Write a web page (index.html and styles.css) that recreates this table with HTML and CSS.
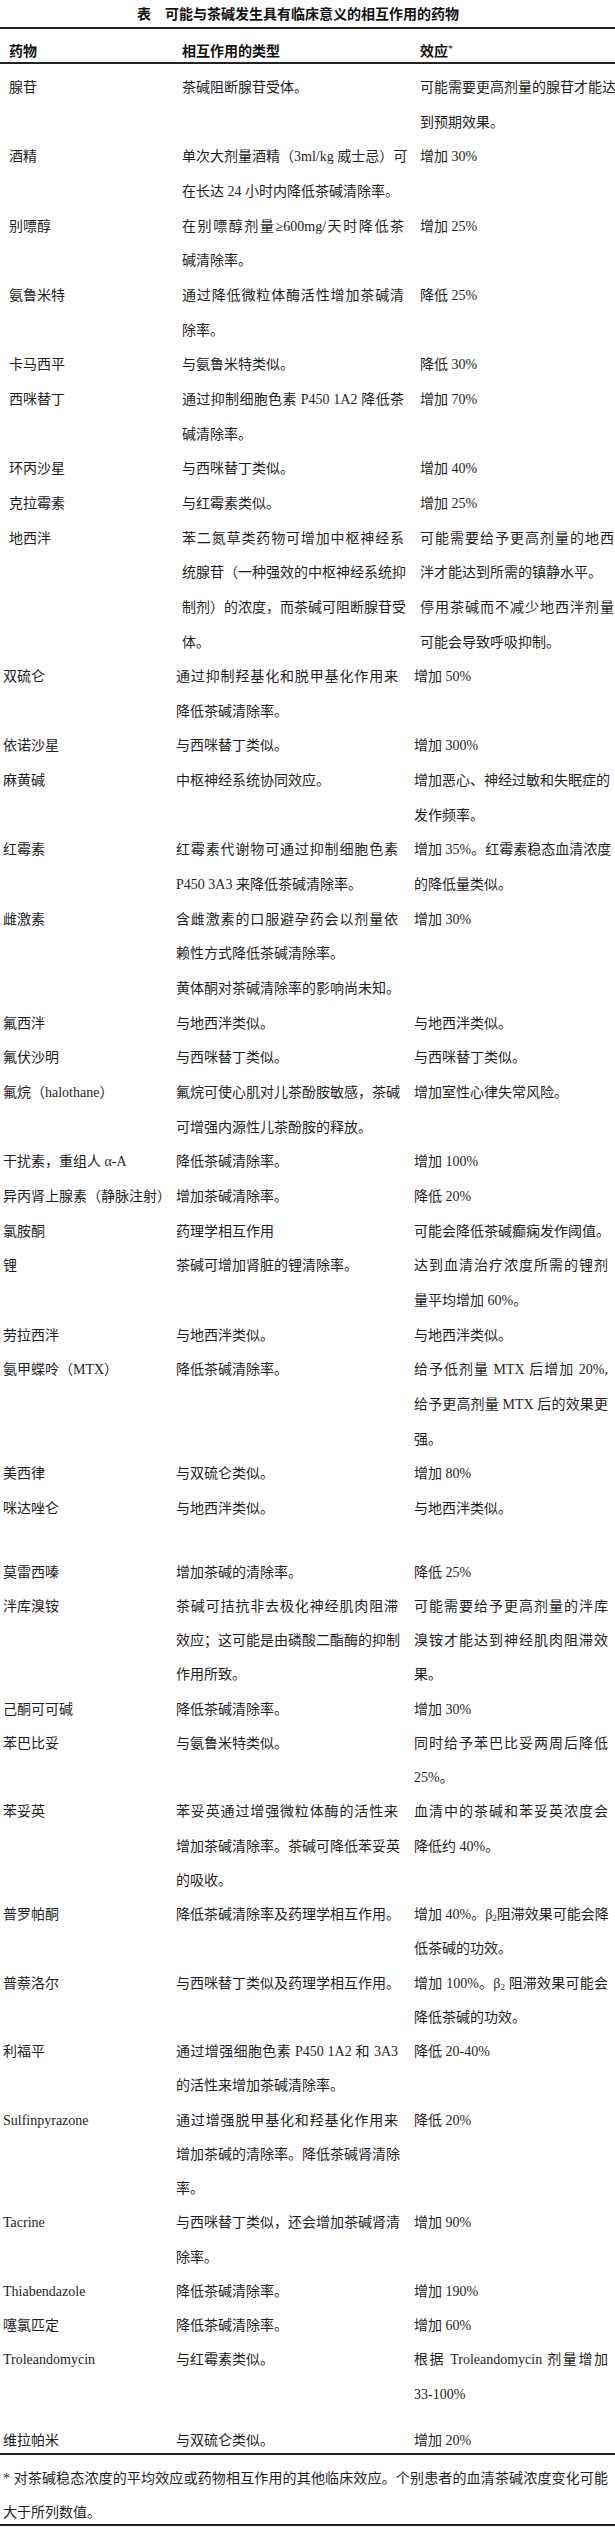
FILE: index.html
```html
<!DOCTYPE html>
<html lang="zh-CN">
<head>
<meta charset="utf-8">
<title>可能与茶碱发生具有临床意义的相互作用的药物</title>
<link rel="stylesheet" href="styles.css">
</head>
<body>
<div class="page">
  <h1 class="title">表&emsp;可能与茶碱发生具有临床意义的相互作用的药物</h1>
  <div class="table">
    <div class="head row">
      <div class="c1">药物</div>
      <div class="c2">相互作用的类型</div>
      <div class="c3">效应<sup class="star">*</sup></div>
    </div>
    <div class="body">
      <div class="grp grp-a">
        <div class="row"><div class="c1">腺苷</div><div class="c2"><span class="l">茶碱阻断腺苷受体。</span></div><div class="c3"><span class="l j">可能需要更高剂量的腺苷才能达</span><span class="l">到预期效果。</span></div></div>
        <div class="row"><div class="c1">酒精</div><div class="c2"><span class="l j">单次大剂量酒精（3ml/kg 威士忌）可</span><span class="l">在长达 24 小时内降低茶碱清除率。</span></div><div class="c3"><span class="l">增加 30%</span></div></div>
        <div class="row"><div class="c1">别嘌醇</div><div class="c2"><span class="l j">在别嘌醇剂量≥600mg/天时降低茶</span><span class="l">碱清除率。</span></div><div class="c3"><span class="l">增加 25%</span></div></div>
        <div class="row"><div class="c1">氨鲁米特</div><div class="c2"><span class="l j">通过降低微粒体酶活性增加茶碱清</span><span class="l">除率。</span></div><div class="c3"><span class="l">降低 25%</span></div></div>
        <div class="row"><div class="c1">卡马西平</div><div class="c2"><span class="l">与氨鲁米特类似。</span></div><div class="c3"><span class="l">降低 30%</span></div></div>
        <div class="row"><div class="c1">西咪替丁</div><div class="c2"><span class="l j">通过抑制细胞色素 P450 1A2 降低茶</span><span class="l">碱清除率。</span></div><div class="c3"><span class="l">增加 70%</span></div></div>
        <div class="row"><div class="c1">环丙沙星</div><div class="c2"><span class="l">与西咪替丁类似。</span></div><div class="c3"><span class="l">增加 40%</span></div></div>
        <div class="row"><div class="c1">克拉霉素</div><div class="c2"><span class="l">与红霉素类似。</span></div><div class="c3"><span class="l">增加 25%</span></div></div>
        <div class="row"><div class="c1">地西泮</div><div class="c2"><span class="l j">苯二氮草类药物可增加中枢神经系</span><span class="l j">统腺苷（一种强效的中枢神经系统抑</span><span class="l j">制剂）的浓度，而茶碱可阻断腺苷受</span><span class="l">体。</span></div><div class="c3"><span class="l j">可能需要给予更高剂量的地西</span><span class="l">泮才能达到所需的镇静水平。</span><span class="l j">停用茶碱而不减少地西泮剂量</span><span class="l">可能会导致呼吸抑制。</span></div></div>
      </div>
      <div class="grp grp-b">
        <div class="row"><div class="c1">双硫仑</div><div class="c2"><span class="l j">通过抑制羟基化和脱甲基化作用来</span><span class="l">降低茶碱清除率。</span></div><div class="c3"><span class="l">增加 50%</span></div></div>
        <div class="row"><div class="c1">依诺沙星</div><div class="c2"><span class="l">与西咪替丁类似。</span></div><div class="c3"><span class="l">增加 300%</span></div></div>
        <div class="row"><div class="c1">麻黄碱</div><div class="c2"><span class="l">中枢神经系统协同效应。</span></div><div class="c3"><span class="l j">增加恶心、神经过敏和失眠症的</span><span class="l">发作频率。</span></div></div>
        <div class="row"><div class="c1">红霉素</div><div class="c2"><span class="l j">红霉素代谢物可通过抑制细胞色素</span><span class="l">P450 3A3 来降低茶碱清除率。</span></div><div class="c3"><span class="l j">增加 35%。红霉素稳态血清浓度</span><span class="l">的降低量类似。</span></div></div>
        <div class="row"><div class="c1">雌激素</div><div class="c2"><span class="l j">含雌激素的口服避孕药会以剂量依</span><span class="l">赖性方式降低茶碱清除率。</span><span class="l">黄体酮对茶碱清除率的影响尚未知。</span></div><div class="c3"><span class="l">增加 30%</span></div></div>
        <div class="row"><div class="c1">氟西泮</div><div class="c2"><span class="l">与地西泮类似。</span></div><div class="c3"><span class="l">与地西泮类似。</span></div></div>
        <div class="row"><div class="c1">氟伏沙明</div><div class="c2"><span class="l">与西咪替丁类似。</span></div><div class="c3"><span class="l">与西咪替丁类似。</span></div></div>
        <div class="row"><div class="c1">氟烷（halothane）</div><div class="c2"><span class="l j">氟烷可使心肌对儿茶酚胺敏感，茶碱</span><span class="l">可增强内源性儿茶酚胺的释放。</span></div><div class="c3"><span class="l">增加室性心律失常风险。</span></div></div>
        <div class="row"><div class="c1">干扰素，重组人 α-A</div><div class="c2"><span class="l">降低茶碱清除率。</span></div><div class="c3"><span class="l">增加 100%</span></div></div>
        <div class="row"><div class="c1">异丙肾上腺素（静脉注射）</div><div class="c2"><span class="l">增加茶碱清除率。</span></div><div class="c3"><span class="l">降低 20%</span></div></div>
        <div class="row"><div class="c1">氯胺酮</div><div class="c2"><span class="l">药理学相互作用</span></div><div class="c3"><span class="l">可能会降低茶碱癫痫发作阈值。</span></div></div>
        <div class="row"><div class="c1">锂</div><div class="c2"><span class="l">茶碱可增加肾脏的锂清除率。</span></div><div class="c3"><span class="l j">达到血清治疗浓度所需的锂剂</span><span class="l">量平均增加 60%。</span></div></div>
        <div class="row"><div class="c1">劳拉西泮</div><div class="c2"><span class="l">与地西泮类似。</span></div><div class="c3"><span class="l">与地西泮类似。</span></div></div>
        <div class="row"><div class="c1">氨甲蝶呤（MTX）</div><div class="c2"><span class="l">降低茶碱清除率。</span></div><div class="c3"><span class="l j">给予低剂量 MTX 后增加 20%,</span><span class="l j">给予更高剂量 MTX 后的效果更</span><span class="l">强。</span></div></div>
        <div class="row"><div class="c1">美西律</div><div class="c2"><span class="l">与双硫仑类似。</span></div><div class="c3"><span class="l">增加 80%</span></div></div>
        <div class="row"><div class="c1">咪达唑仑</div><div class="c2"><span class="l">与地西泮类似。</span></div><div class="c3"><span class="l">与地西泮类似。</span></div></div>
      </div>
      <div class="grp grp-c">
        <div class="row"><div class="c1">莫雷西嗪</div><div class="c2"><span class="l">增加茶碱的清除率。</span></div><div class="c3"><span class="l">降低 25%</span></div></div>
        <div class="row"><div class="c1">泮库溴铵</div><div class="c2"><span class="l j">茶碱可拮抗非去极化神经肌肉阻滞</span><span class="l j">效应；这可能是由磷酸二酯酶的抑制</span><span class="l">作用所致。</span></div><div class="c3"><span class="l j">可能需要给予更高剂量的泮库</span><span class="l j">溴铵才能达到神经肌肉阻滞效</span><span class="l">果。</span></div></div>
        <div class="row"><div class="c1">己酮可可碱</div><div class="c2"><span class="l">降低茶碱清除率。</span></div><div class="c3"><span class="l">增加 30%</span></div></div>
        <div class="row"><div class="c1">苯巴比妥</div><div class="c2"><span class="l">与氨鲁米特类似。</span></div><div class="c3"><span class="l j">同时给予苯巴比妥两周后降低</span><span class="l">25%。</span></div></div>
        <div class="row"><div class="c1">苯妥英</div><div class="c2"><span class="l j">苯妥英通过增强微粒体酶的活性来</span><span class="l j">增加茶碱清除率。茶碱可降低苯妥英</span><span class="l">的吸收。</span></div><div class="c3"><span class="l j">血清中的茶碱和苯妥英浓度会</span><span class="l">降低约 40%。</span></div></div>
        <div class="row"><div class="c1">普罗帕酮</div><div class="c2"><span class="l">降低茶碱清除率及药理学相互作用。</span></div><div class="c3"><span class="l j">增加 40%。β<sub class="s2">2</sub>阻滞效果可能会降</span><span class="l">低茶碱的功效。</span></div></div>
        <div class="row"><div class="c1">普萘洛尔</div><div class="c2"><span class="l">与西咪替丁类似及药理学相互作用。</span></div><div class="c3"><span class="l j">增加 100%。β<sub class="s2">2</sub> 阻滞效果可能会</span><span class="l">降低茶碱的功效。</span></div></div>
        <div class="row"><div class="c1">利福平</div><div class="c2"><span class="l j">通过增强细胞色素 P450 1A2 和 3A3</span><span class="l">的活性来增加茶碱清除率。</span></div><div class="c3"><span class="l">降低 20-40%</span></div></div>
        <div class="row"><div class="c1">Sulfinpyrazone</div><div class="c2"><span class="l j">通过增强脱甲基化和羟基化作用来</span><span class="l j">增加茶碱的清除率。降低茶碱肾清除</span><span class="l">率。</span></div><div class="c3"><span class="l">降低 20%</span></div></div>
        <div class="row"><div class="c1">Tacrine</div><div class="c2"><span class="l j">与西咪替丁类似，还会增加茶碱肾清</span><span class="l">除率。</span></div><div class="c3"><span class="l">增加 90%</span></div></div>
        <div class="row"><div class="c1">Thiabendazole</div><div class="c2"><span class="l">降低茶碱清除率。</span></div><div class="c3"><span class="l">增加 190%</span></div></div>
        <div class="row"><div class="c1">噻氯匹定</div><div class="c2"><span class="l">降低茶碱清除率。</span></div><div class="c3"><span class="l">增加 60%</span></div></div>
        <div class="row"><div class="c1">Troleandomycin</div><div class="c2"><span class="l">与红霉素类似。</span></div><div class="c3"><span class="l j">根据 Troleandomycin 剂量增加</span><span class="l">33-100%</span></div></div>
        <div class="row row-last"><div class="c1">维拉帕米</div><div class="c2"><span class="l">与双硫仑类似。</span></div><div class="c3"><span class="l">增加 20%</span></div></div>
      </div>
    </div>
    <div class="foot">
      <p class="foot-text"><span class="l j">* 对茶碱稳态浓度的平均效应或药物相互作用的其他临床效应。个别患者的血清茶碱浓度变化可能</span><span class="l">大于所列数值。</span></p>
    </div>
  </div>
</div>
</body>
</html>
```

FILE: styles.css
```css
html, body {
  margin: 0;
  padding: 0;
  background: #ffffff;
}

body {
  color: #1e1e1e;
  font-family: "Liberation Serif", "Noto Sans CJK SC", serif;
  font-size: 14px;
}

.page {
  width: 615px;
}

.title {
  margin: 0;
  padding: 3px 19px 0 0;
  height: 24px;
  line-height: 24px;
  text-align: center;
  font-size: 14px;
  font-weight: bold;
  font-family: "Liberation Serif", "Noto Sans CJK SC", serif;
  color: #111;
}

.table {
  border-top: 2px solid #222;
}

.row {
  display: grid;
  grid-template-columns: 173px 238px 1fr;
}

.head {
  padding: 13px 0 0 9px;
  height: 20px;
  line-height: 20px;
  font-weight: bold;
  color: #111;
  border-bottom: 2px solid #222;
}

.star {
  font-weight: normal;
  font-size: 10px;
  line-height: 0;
  vertical-align: 4px;
}

.body {
  padding-top: 7px;
}

.grp-a {
  padding-left: 9px;
  line-height: 34.65px;
}

.grp-b {
  padding-left: 3px;
  line-height: 34.65px;
}

.grp-c {
  padding-left: 3px;
  line-height: 34.25px;
  margin-top: 29px;
}

.row-last {
  margin-top: 12px;
  margin-bottom: -5px;
}

.l {
  display: block;
  white-space: nowrap;
}

.j {
  text-align: justify;
  text-align-last: justify;
}

.c2 .j {
  width: 222px;
}

.c3 .j {
  width: 194px;
}

.s2 {
  font-size: 9px;
  line-height: 0;
  vertical-align: -2px;
}

.foot {
  padding: 6.5px 0 0 3px;
  border-top: 2px solid #222;
  border-bottom: 2px solid #222;
}

.foot-text {
  margin: 0 0 -7px 0;
  line-height: 34.65px;
}

.foot-text .j {
  width: 605px;
}
```
